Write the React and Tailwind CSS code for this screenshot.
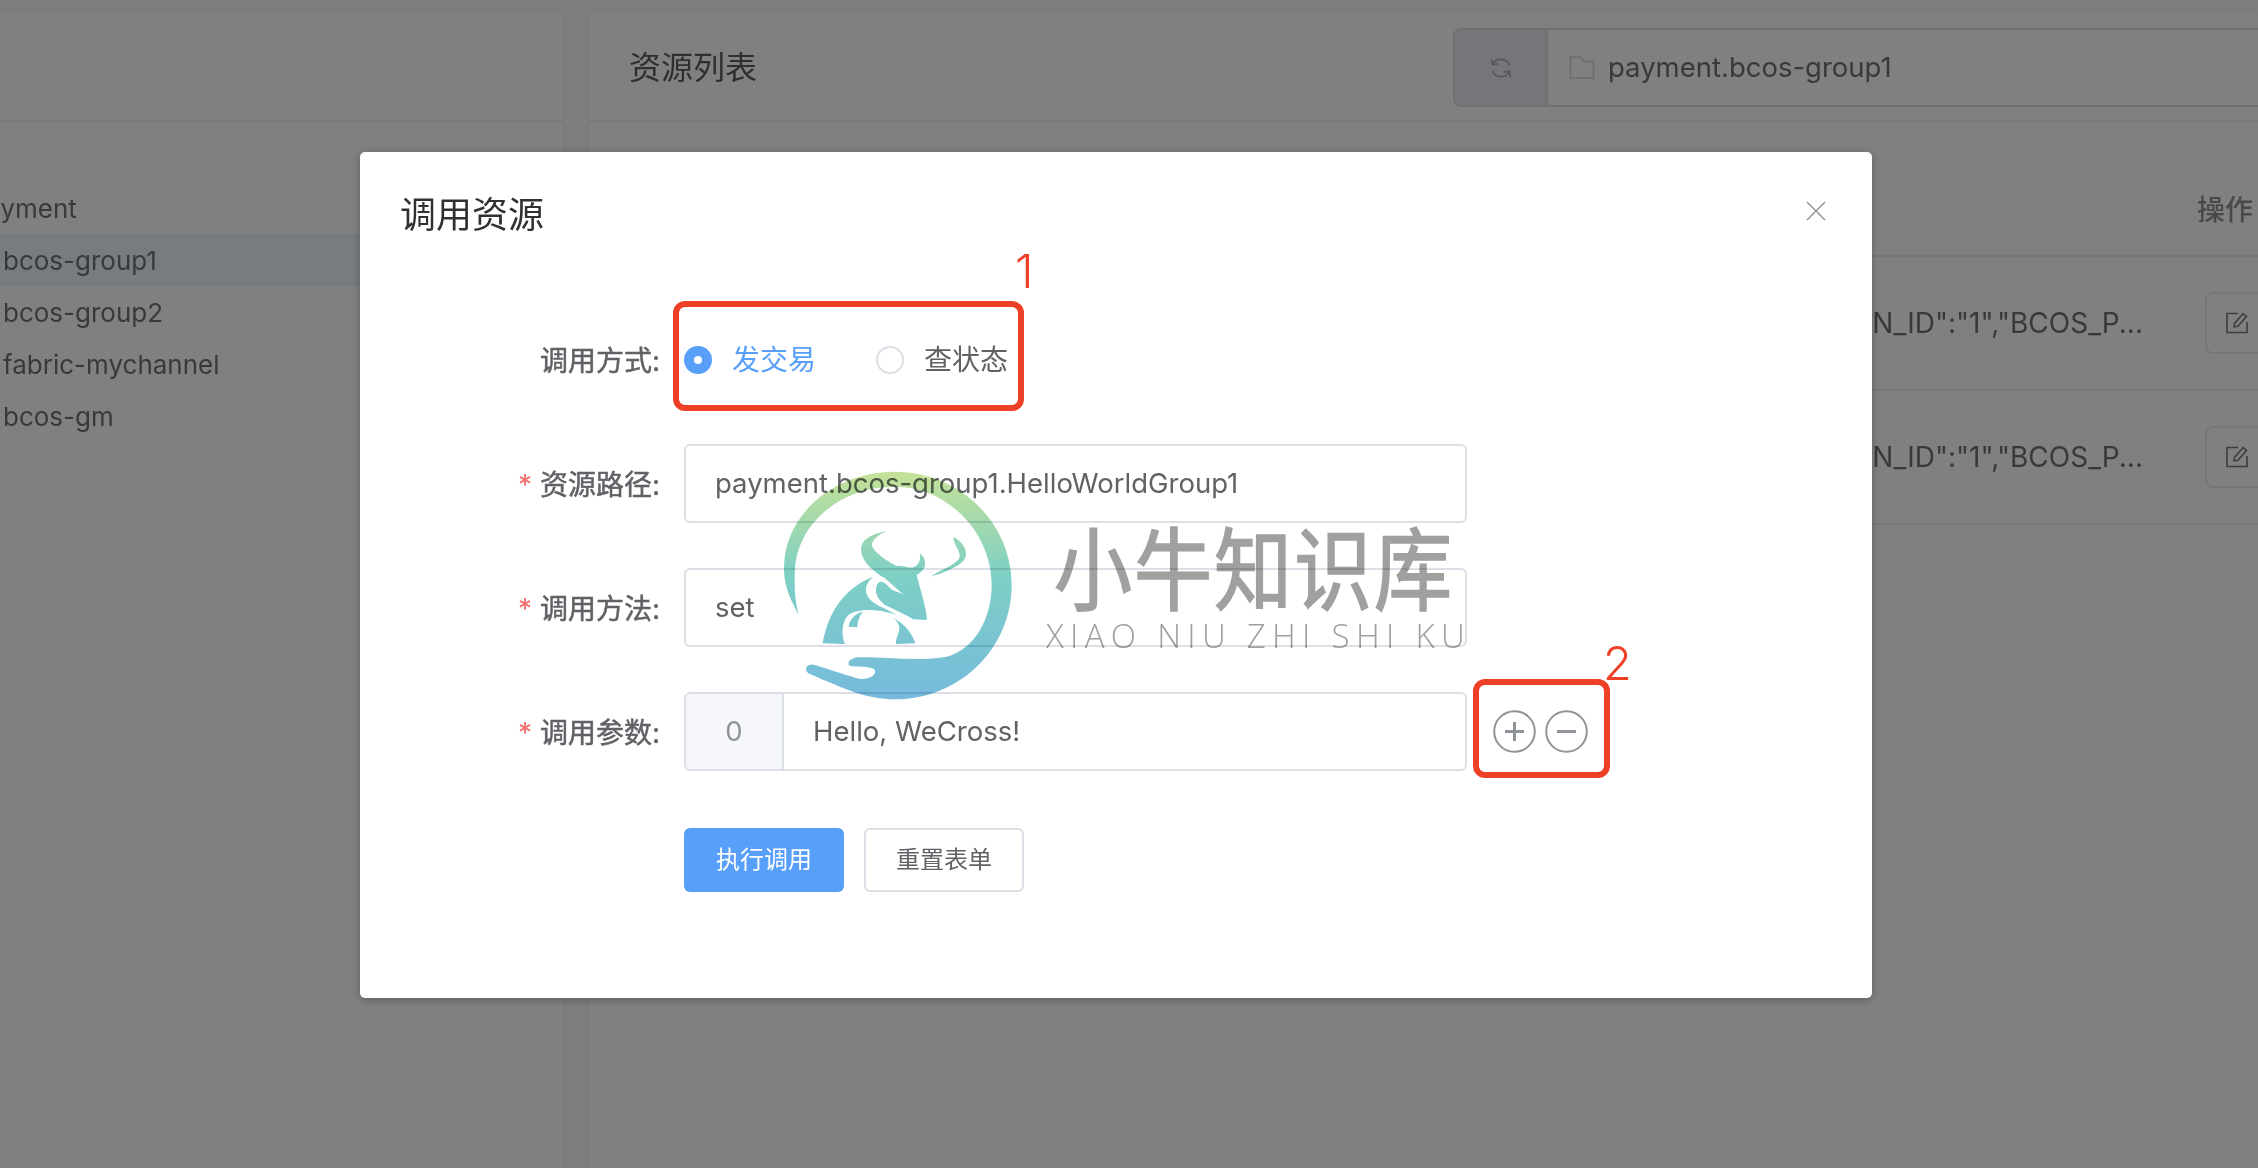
import React from 'react'

const cjk = { fontFamily: 'Inter, "Noto Sans CJK SC", sans-serif' }

const resources = ['bcos-group1', 'bcos-group2', 'fabric-mychannel', 'bcos-gm']

function RefreshIcon() {
    return (
        <svg width="26" height="26" viewBox="0 0 24 24" fill="none" stroke="#55575b" strokeWidth="1.5">
            <path d="M3.500 3.500l.6 5.600 5.400-1" />
            <path d="M4.300 9A8.500 8.500 0 0 1 20 9.500" />
            <path d="M20.500 20.500l-.6-5.600-5.400 1" />
            <path d="M19.700 15A8.500 8.500 0 0 1 4 14.500" />
        </svg>
    )
}

function FolderIcon() {
    return (
        <svg width="26" height="23" viewBox="0 0 26 23" fill="none" stroke="#6b6c6f" strokeWidth="1.6">
            <path d="M1.500 1h10l3.500 4.500h9.500v16.500h-23z" />
        </svg>
    )
}

function EditIcon() {
    return (
        <svg width="22" height="22" viewBox="0 0 22 22" fill="none" stroke="#3c3d3f" strokeWidth="1.6">
            <path d="M12 1.500H1v19h20V10" />
            <path d="M8.500 11.500L17 1.500l3.500 2.800-8.500 10-4 .6z" />
        </svg>
    )
}

function CircleButton({ minus }) {
    return (
        <svg width="43" height="43" viewBox="0 0 43 43" fill="none" stroke="#909399" strokeWidth="2">
            <circle cx="21.500" cy="21.500" r="20.300" />
            <path d="M12 21.500h19" strokeWidth="3" />
            {!minus && <path d="M21.500 12v19" strokeWidth="3" />}
        </svg>
    )
}

function Logo() {
    return (
        <svg className="absolute left-[410px] top-[308px] mix-blend-multiply" width="260" height="250" viewBox="0 0 780 750">
            <defs>
                <linearGradient id="logoFill" gradientUnits="userSpaceOnUse" x1="0" y1="35" x2="0" y2="718">
                    <stop offset="0" stopColor="#c6e297" />
                    <stop offset="0.45" stopColor="#7ed0c4" />
                    <stop offset="1" stopColor="#76badd" />
                </linearGradient>
            </defs>
            <g fill="url(#logoFill)">
                <path d="M85 462C55 410 42 370 42 325C42 165 190 35 375 35C570 35 725 190 725 375C725 565 570 718 375 718C290 718 230 690 115 640C105 632 105 618 120 614C130 612 150 620 260 655C290 662 318 648 315 632C312 618 270 622 240 618C228 608 240 595 265 592C330 590 450 605 530 590C610 570 665 480 665 375C665 215 530 80 375 80C210 80 85 190 75 325C72 380 75 420 85 462Z" />
                <path d="M352 212C300 222 272 240 273 270C275 305 310 335 345 355L405 408C390 395 370 395 360 385C345 365 330 360 322 372C312 395 320 415 345 435C375 450 410 465 430 478L470 480C472 470 465 440 460 420C452 390 445 365 440 345C455 335 468 325 465 305C462 290 455 285 450 280C452 300 448 315 430 322C410 325 395 315 380 318C345 300 310 275 305 255C305 240 330 220 352 212Z" />
                <path d="M310 350C230 380 175 450 158 550L225 552C215 530 212 490 235 465C270 440 340 450 380 465C340 440 285 430 288 385C290 370 300 358 310 350Z" />
                <path d="M278 455C255 460 238 480 236 500L262 502C262 485 268 470 278 455Z" />
                <path d="M352 468C380 475 395 495 385 520C380 535 376 545 378 552L436 550C425 515 395 480 352 468Z" />
                <path d="M550 230C570 240 590 262 588 285C585 310 550 325 525 335C510 342 495 345 482 350C510 330 550 320 568 295C575 275 552 260 550 230Z" />
            </g>
        </svg>
    )
}

function FormRow({ label, required, children }) {
    return (
        <div className="flex items-center h-[79px] mb-[45px]">
            <label className="w-[300px] shrink-0 pr-[24px] pt-[2px] text-right text-[28px] text-[#606266] [-webkit-text-stroke:0.5px_#606266]">
                {required && <span className="text-[#f56c6c] mr-[8px] [-webkit-text-stroke:0]">*</span>}
                {label}:
            </label>
            {children}
        </div>
    )
}

function TableRow() {
    return (
        <div className="flex items-center justify-end h-[134px] border-b-2 border-[#76777a] text-[28px] text-[#38393b] whitespace-nowrap">
            <span>"CHAIN_ID":"1","BCOS_P...</span>
            <button className="ml-[62px] -mr-[50px] w-[103px] h-[62px] shrink-0 pl-[19px] flex items-center border-2 border-[#76777a] rounded-[8px]">
                <EditIcon />
            </button>
        </div>
    )
}

export default function App() {
    return (
        <div className="relative w-full h-[1168px] overflow-hidden bg-[#7c7d7e] pt-[12px]" style={cjk}>
            <div className="flex gap-[24px] h-full">
                {/* left tree panel */}
                <div className="w-[564px] shrink-0 bg-[#808080] border-r border-[#78797c] rounded-t-[6px] overflow-hidden">
                    <div className="h-[110px] border-b-2 border-[#78797c]"></div>
                    <div className="pt-[60px] text-[26px] text-[#38393b]">
                        <div className="h-[52px] leading-[54px] -ml-[30px]">payment</div>
                        {resources.map((name, i) => (
                            <div key={name} className={`h-[52px] leading-[54px] pl-[3px] ${i === 0 ? 'bg-[#787b80]' : ''}`}>{name}</div>
                        ))}
                    </div>
                </div>

                {/* right list panel */}
                <div className="flex-1 min-w-0 bg-[#808080] border-l border-[#78797c] rounded-t-[6px] overflow-hidden">
                    <div className="flex items-center justify-between h-[110px] pl-[40px] pt-[3px] border-b-2 border-[#78797c]">
                        <span className="text-[32px] text-[#2e2f30]">资源列表</span>
                        <div className="flex w-[830px] h-[79px] -mr-[25px] shrink-0 border-2 border-[#6f7074] rounded-[8px] text-[27.500px] text-[#38393b]">
                            <div className="w-[93px] shrink-0 flex items-center justify-center bg-[#74767a] border-r-2 border-[#6f7074] rounded-l-[6px]">
                                <RefreshIcon />
                            </div>
                            <div className="flex items-center pl-[21px] gap-[13px]">
                                <FolderIcon />
                                <span>payment.bcos-group1</span>
                            </div>
                        </div>
                    </div>
                    <div className="h-[135px] flex items-center justify-end border-b-2 border-[#76777a] pt-[43px]">
                        <span className="text-[28px] font-medium text-[#48494b] w-[61px] overflow-hidden whitespace-nowrap">操作</span>
                    </div>
                    <TableRow />
                    <TableRow />
                </div>
            </div>

            {/* dialog */}
            <div className="absolute left-[360px] top-[152px] w-[1512px] h-[846px] bg-white rounded-[5px] shadow-[0_2px_8px_rgba(0,0,0,0.25)]">
                <div className="flex items-center justify-between h-[126px] pl-[40px] pr-[46px]">
                    <span className="text-[36px] text-[#303133]">调用资源</span>
                    <svg className="-mt-[8px]" width="20" height="20" viewBox="0 0 20 20" stroke="#909399" strokeWidth="1.500">
                        <path d="M1 1l18 18M19 1L1 19" />
                    </svg>
                </div>

                <div className="pt-[42px] pl-[24px]">
                    <FormRow label="调用方式">
                        <div className="flex items-center text-[28px]">
                            <span className="w-[28px] h-[28px] rounded-full bg-[#589ffa] flex items-center justify-center">
                                <span className="w-[8px] h-[8px] rounded-full bg-white"></span>
                            </span>
                            <span className="ml-[20px] w-[144px] text-[#589ffa]">发交易</span>
                            <span className="w-[28px] h-[28px] rounded-full border-2 border-[#dcdfe6]"></span>
                            <span className="ml-[20px] text-[#606266]">查状态</span>
                        </div>
                    </FormRow>
                    <FormRow label="资源路径" required>
                        <div className="w-[783px] h-full flex items-center pl-[29px] border-2 border-[#dcdfe6] rounded-[6px] text-[27.500px] text-[#606266]">
                            payment.bcos-group1.HelloWorldGroup1
                        </div>
                    </FormRow>
                    <FormRow label="调用方法" required>
                        <div className="w-[783px] h-full flex items-center pl-[29px] border-2 border-[#dcdfe6] rounded-[6px] text-[27.500px] text-[#606266]">
                            set
                        </div>
                    </FormRow>
                    <FormRow label="调用参数" required>
                        <div className="w-[783px] h-full flex border-2 border-[#dcdfe6] rounded-[6px] text-[27.500px]">
                            <div className="w-[98px] shrink-0 flex items-center justify-center bg-[#f5f7fa] border-r-2 border-[#dcdfe6] rounded-l-[4px] text-[#909399]">0</div>
                            <div className="flex items-center pl-[29px] text-[#606266]">Hello, WeCross!</div>
                        </div>
                        <div className="flex items-center gap-[9px] ml-[26px]">
                            <CircleButton />
                            <CircleButton minus />
                        </div>
                    </FormRow>
                    <div className="flex gap-[20px] pl-[300px] mt-[57px] text-[24px]">
                        <button className="w-[160px] h-[64px] rounded-[6px] bg-[#589ffa] text-white">执行调用</button>
                        <button className="w-[160px] h-[64px] rounded-[6px] border-2 border-[#dcdfe6] text-[#606266]">重置表单</button>
                    </div>
                </div>

                {/* annotations */}
                <div className="absolute left-[313px] top-[149px] w-[351px] h-[110px] border-[6px] border-[#ee4026] rounded-[12px]"></div>
                <span className="absolute left-[655px] top-[92px] text-[47px] font-light leading-[54px] text-[#ee4026]">1</span>
                <div className="absolute left-[1113px] top-[527px] w-[137px] h-[99px] border-[6px] border-[#ee4026] rounded-[12px]"></div>
                <span className="absolute left-[1243px] top-[484px] text-[47px] font-light leading-[54px] text-[#ee4026]">2</span>

                {/* watermark */}
                <Logo />
                <div className="absolute left-[694px] top-[369px] text-[78px] leading-[100px] tracking-[2px] scale-y-[1.15] text-[#a0a0a0] mix-blend-multiply whitespace-nowrap [-webkit-text-stroke:1.500px_#a0a0a0]">小牛知识库</div>
                <div className="absolute left-[686px] top-[466px] text-[33px] leading-[36px] tracking-[6.300px] font-light text-[#a0a0a0] mix-blend-multiply whitespace-nowrap" style={{ fontFamily: '"Open Sans", sans-serif' }}>XIAO NIU ZHI SHI KU</div>
            </div>
        </div>
    )
}
